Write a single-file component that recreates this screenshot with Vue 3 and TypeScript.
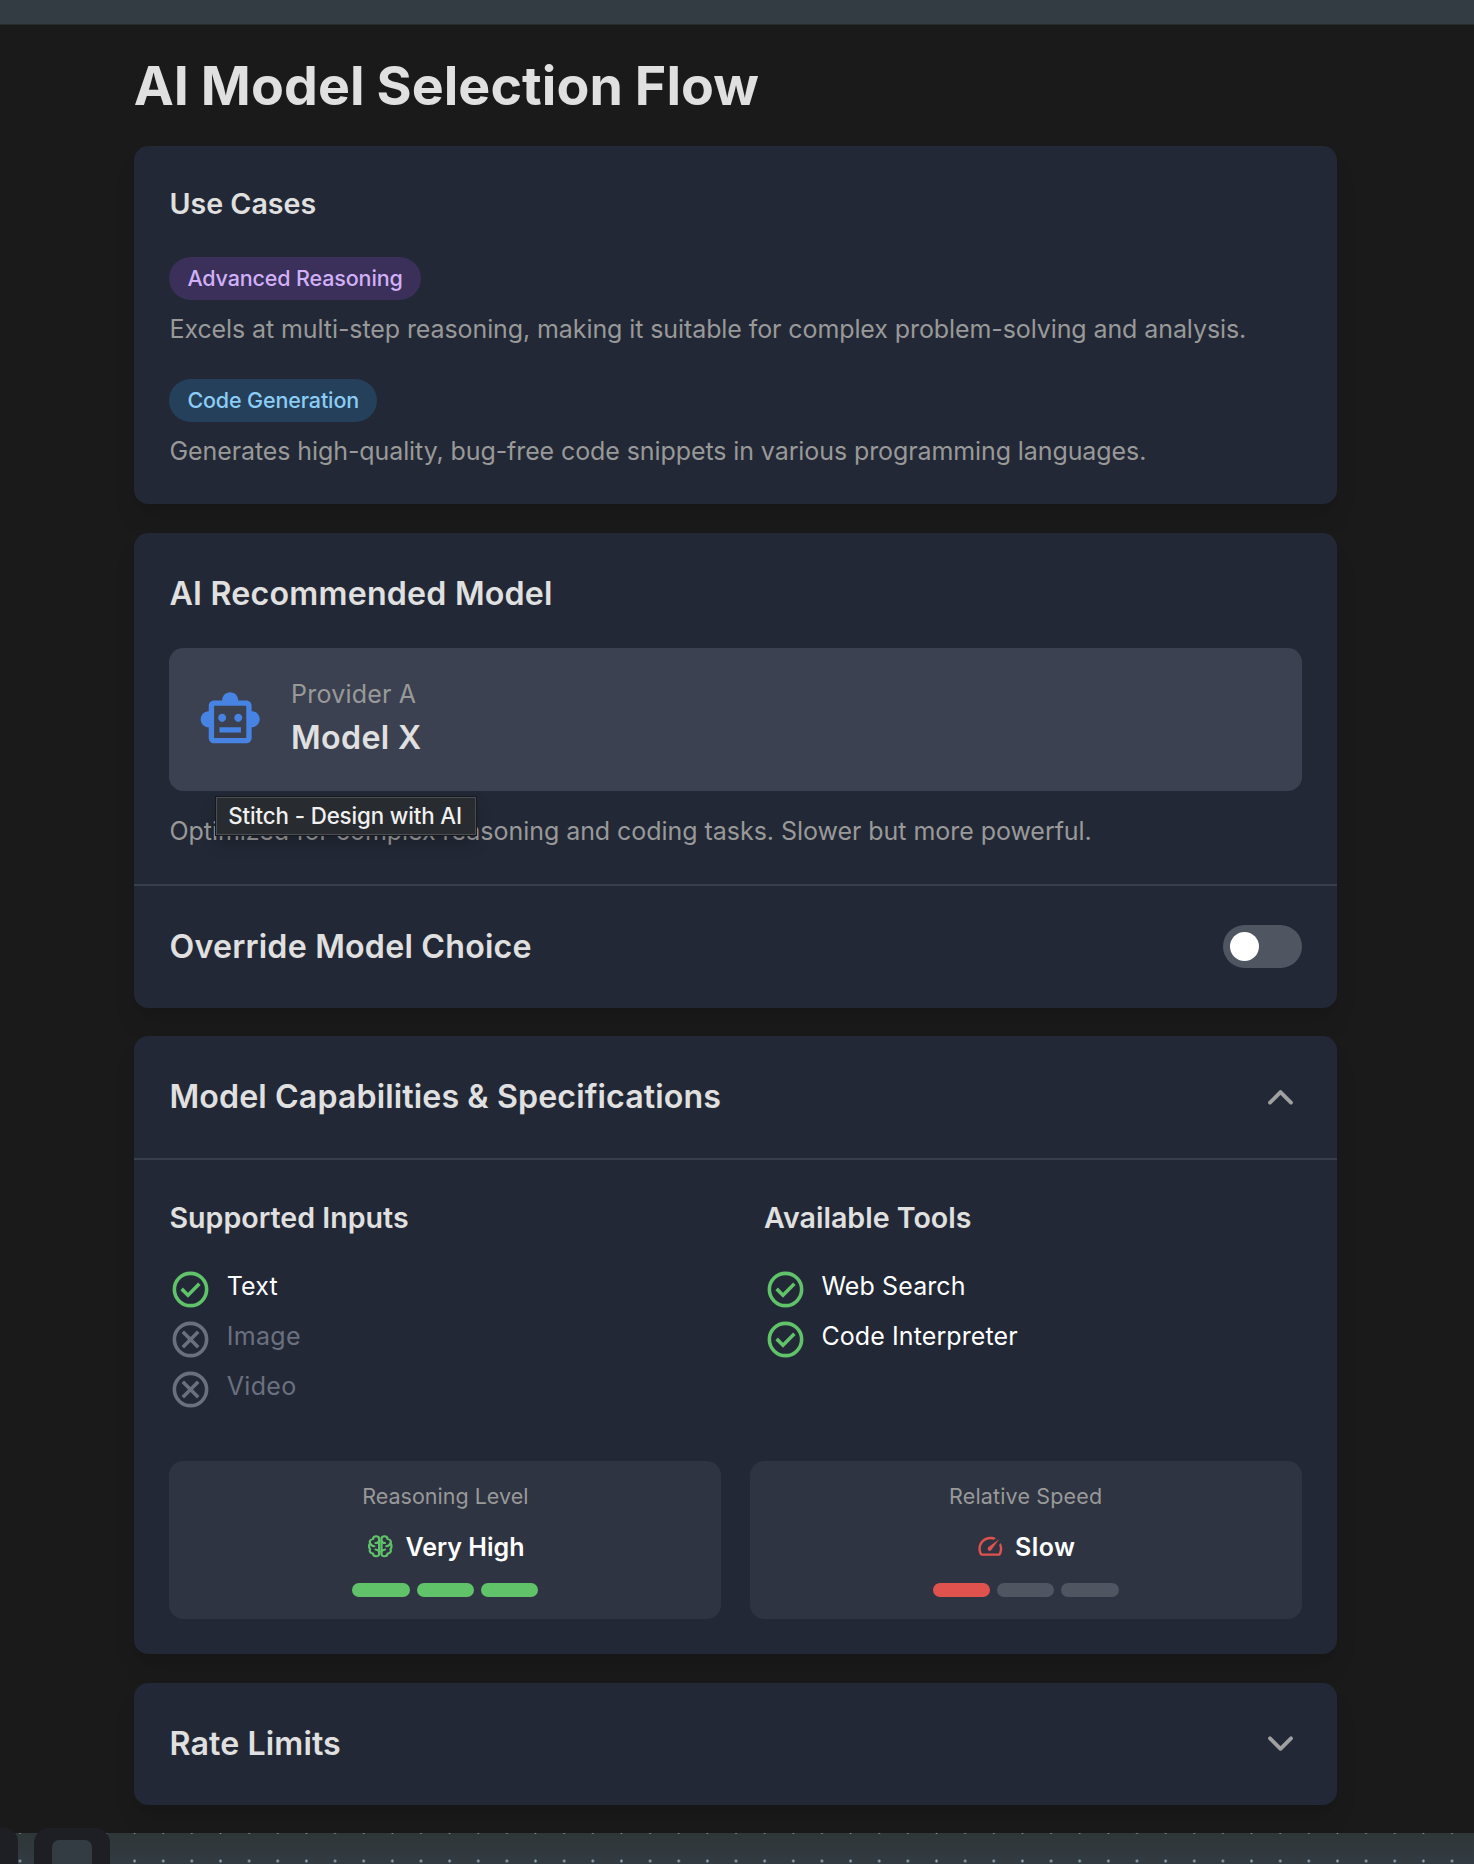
<script setup lang="ts">
interface UseCase { label: string; tone: string; text: string }
interface Feature { label: string; on: boolean }
interface Meter { label: string; value: string; icon: string; tone: string; level: number }

const useCases: UseCase[] = [
  { label: 'Advanced Reasoning', tone: 'purple', text: 'Excels at multi-step reasoning, making it suitable for complex problem-solving and analysis.' },
  { label: 'Code Generation', tone: 'blue', text: 'Generates high-quality, bug-free code snippets in various programming languages.' },
]

const groups: { title: string; items: Feature[] }[] = [
  {
    title: 'Supported Inputs',
    items: [
      { label: 'Text', on: true },
      { label: 'Image', on: false },
      { label: 'Video', on: false },
    ],
  },
  {
    title: 'Available Tools',
    items: [
      { label: 'Web Search', on: true },
      { label: 'Code Interpreter', on: true },
    ],
  },
]

const meters: Meter[] = [
  { label: 'Reasoning Level', value: 'Very High', icon: 'brain', tone: 'green', level: 3 },
  { label: 'Relative Speed', value: 'Slow', icon: 'gauge', tone: 'red', level: 1 },
]
</script>

<template>
  <div class="canvas">
    <main class="page">
      <h1>AI Model Selection Flow</h1>

      <section class="card use-cases">
        <h3>Use Cases</h3>
        <div v-for="u in useCases" :key="u.label" class="use-case">
          <span class="chip" :class="u.tone">{{ u.label }}</span>
          <p class="body">{{ u.text }}</p>
        </div>
      </section>

      <section class="card">
        <div class="recommended">
          <h2>AI Recommended Model</h2>
          <div class="model">
            <svg class="robot" viewBox="0 0 24 24"><path fill="currentColor" d="M20 9V7c0-1.1-.9-2-2-2h-3c0-1.66-1.34-3-3-3S9 3.34 9 5H6c-1.1 0-2 .9-2 2v2c-1.66 0-3 1.34-3 3s1.34 3 3 3v4c0 1.1.9 2 2 2h12c1.1 0 2-.9 2-2v-4c1.66 0 3-1.34 3-3s-1.34-3-3-3zm-2 10H6V7h12v12zm-9-6c-.83 0-1.5-.67-1.5-1.5S8.17 10 9 10s1.5.67 1.5 1.5S9.83 13 9 13zm7.5-1.5c0 .83-.67 1.5-1.5 1.5s-1.5-.67-1.5-1.5.67-1.5 1.5-1.5 1.5.67 1.5 1.5zM8 15h8v2H8v-2z" /></svg>
            <div>
              <div class="body provider">Provider A</div>
              <div class="model-name">Model X</div>
            </div>
            <div class="tooltip">Stitch - Design with AI</div>
          </div>
          <p class="body summary">Optimized for complex reasoning and coding tasks. Slower but more powerful.</p>
        </div>
        <div class="row override">
          <h2>Override Model Choice</h2>
          <span class="toggle"><i></i></span>
        </div>
      </section>

      <section class="card">
        <div class="row">
          <h2 class="specs-title">Model Capabilities &amp; Specifications</h2>
          <svg class="chevron" viewBox="0 0 43 43"><path d="M11 26.600 21.500 16.100 32 26.600" /></svg>
        </div>
        <div class="specs">
          <div class="groups">
            <div v-for="g in groups" :key="g.title">
              <h3>{{ g.title }}</h3>
              <ul>
                <li v-for="f in g.items" :key="f.label" :class="{ off: !f.on }">
                  <svg viewBox="0 0 24 24">
                    <circle cx="12" cy="12" r="9" />
                    <path v-if="f.on" d="M10.6 16.6 17.65 9.55 16.25 8.15 10.6 13.8 7.75 10.95 6.35 12.35Z" />
                    <path v-else d="m8.4 17 3.6-3.6 3.6 3.6 1.4-1.4-3.6-3.6L17 8.4 15.6 7 12 10.6 8.4 7 7 8.4l3.6 3.6L7 15.6Z" />
                  </svg>
                  <span>{{ f.label }}</span>
                </li>
              </ul>
            </div>
          </div>
          <div class="meters">
            <div v-for="m in meters" :key="m.label" class="meter" :class="m.tone">
              <div class="meter-label">{{ m.label }}</div>
              <div class="meter-value">
                <svg v-if="m.icon === 'brain'" viewBox="0 0 24 24" class="line">
                  <g transform="translate(-1.3 0) scale(1.108 1)">
                    <path d="M11.100 5.600V18.400C11.100 21 6.700 21.100 6.500 18.100 4.300 17.900 3.500 16 4.300 14.400 3.200 13.200 3.200 10.800 4.300 9.600 3.500 8 4.300 6.100 6.500 5.900 6.700 2.900 11.100 3 11.100 5.600Z" />
                    <path d="M12.900 5.600V18.400C12.900 21 17.300 21.100 17.500 18.100 19.700 17.900 20.500 16 19.700 14.400 20.800 13.200 20.800 10.800 19.700 9.600 20.500 8 19.700 6.100 17.500 5.900 17.300 2.900 12.900 3 12.900 5.600Z" />
                    <path d="M11.100 7.500C10.500 8.700 9.600 9.300 8.400 9.300M11.100 16.500C10.500 15.300 9.600 14.700 8.400 14.700M12.900 7.500C13.500 8.700 14.400 9.300 15.600 9.300M12.900 16.500C13.500 15.300 14.400 14.700 15.600 14.700M4.300 9.600C4.900 11.200 6 11.900 7.500 12M19.700 9.600C19.100 11.200 18 11.900 16.500 12" />
                  </g>
                </svg>
                <svg v-else viewBox="0 0 24 24">
                  <path fill="currentColor" d="M10.450 15.500C11.050 16.100 12.150 16.050 12.700 15.250L19.600 5.900 10.250 12.800C9.400 13.400 9.850 14.900 10.450 15.500ZM12 4C13.800 4 15.350 4.400 16.700 5.200L14.950 6.450C14.100 6.150 13.100 6 12 6 7.600 6 4 9.600 4 14 4 15.400 4.400 16.800 5.100 18H18.900C19.600 16.800 20 15.400 20 14 20 12.900 19.800 11.900 19.400 10.900L20.650 9.150C21.500 10.500 22 12.200 22 14 22 16 21.500 17.800 20.600 19.300 20.200 19.800 19.600 20 18.900 20H5.100C4.400 20 3.800 19.700 3.400 19.100 2.500 17.600 2 15.900 2 14 2 8.500 6.500 4 12 4Z" />
                </svg>
                <span>{{ m.value }}</span>
              </div>
              <div class="bars"><i v-for="n in 3" :key="n" :class="{ fill: n <= m.level }"></i></div>
            </div>
          </div>
        </div>
      </section>

      <section class="card">
        <div class="row">
          <h2 class="specs-title">Rate Limits</h2>
          <svg class="chevron" viewBox="0 0 43 43"><path d="M11 16.300 21.500 26.800 32 16.300" /></svg>
        </div>
      </section>
    </main>
    <div class="dock">
      <div class="dock-item first"></div>
      <div class="dock-item second"><i></i></div>
    </div>
  </div>
</template>

<style>
body { background: #323b42; }
</style>

<style scoped>
* { box-sizing: border-box; }
h1, h2, h3, p, ul { margin: 0; padding: 0; }
.canvas {
  height: 1864px;
  padding-top: 24px;
  display: flex;
  flex-direction: column;
  overflow: hidden;
  background: #343c43;
  color: #e0e0e0;
  font-family: Inter, "Liberation Sans", sans-serif;
}
.page {
  height: 1809px;
  flex: none;
  border-top: 1px solid #272d2e;
  padding: 28.600px 136.700px 0 133.700px;
  display: flex;
  flex-direction: column;
  gap: 28.600px;
  background: #1a1a1a;
}
h1 {
  height: 64px;
  line-height: 64px;
  font-size: 53.700px;
  font-weight: 700;
  letter-spacing: .09px;
  word-spacing: -1px;
  white-space: nowrap;
}
.card {
  border-radius: 14.300px;
  background: #222835;
  box-shadow: 0 18px 27px -5px rgba(0, 0, 0, .1), 0 7px 11px -7px rgba(0, 0, 0, .1);
}
h2 { font-size: 32.200px; line-height: 50px; font-weight: 600; letter-spacing: .2px; white-space: nowrap; }
h3 { font-size: 28.600px; line-height: 43px; font-weight: 600; white-space: nowrap; }
.specs-title { letter-spacing: .1px; }
.body { font-size: 25px; line-height: 35.800px; color: #999; letter-spacing: -.094px; white-space: nowrap; }
.use-cases { height: 358.300px; padding: 36px 35.800px 0; }
.use-cases h3 { margin-bottom: 32px; }
.use-case { height: 122px; }
.chip {
  display: block;
  width: fit-content;
  padding: 0 17.900px;
  border-radius: 22px;
  font-size: 21.500px;
  line-height: 43px;
  font-weight: 500;
  letter-spacing: -.14px;
  white-space: nowrap;
  margin-bottom: 11.500px;
}
.purple { background: #3a3059; color: #d1b0f8; }
.blue { background: #25405a; color: #8ccdf5; }
.recommended { height: 350.800px; padding: 35.800px 35.800px 0; }
.model {
  position: relative;
  display: flex;
  align-items: center;
  gap: 28.600px;
  height: 143px;
  margin: 29.200px 0 23px;
  padding: 0 28.600px;
  border-radius: 14.300px;
  background: #3b4150;
}
.robot { width: 64.400px; height: 64.400px; color: #4783e2; }
.provider { letter-spacing: .2px; padding-top: .4px; }
.summary { letter-spacing: -.046px; }
.model-name { font-size: 32.200px; line-height: 50px; font-weight: 600; letter-spacing: .35px; }
.tooltip {
  position: absolute;
  left: 46.800px;
  top: 149.300px;
  width: 260px;
  height: 38px;
  padding-left: 11px;
  border: 1px solid #4b4e52;
  outline: 1px solid #15181c;
  background: #282b2f;
  color: #f0f0f0;
  font-size: 22.300px;
  font-weight: 500;
  letter-spacing: -.12px;
  line-height: 36px;
  white-space: nowrap;
  box-shadow: 0 8px 16px rgba(0, 0, 0, .2);
}
.row {
  height: 122px;
  padding: 0 35.800px;
  display: flex;
  align-items: center;
  justify-content: space-between;
}
.override { height: 123.900px; border-top: 2px solid #383f4c; }
.toggle {
  width: 79px;
  height: 43px;
  padding: 7px;
  border-radius: 22px;
  background: #4f5561;
}
.toggle i { display: block; width: 29px; height: 29px; border-radius: 50%; background: #fff; }
.chevron { width: 43px; height: 43px; fill: none; stroke: #a0a0a0; stroke-width: 3.800; stroke-linecap: round; stroke-linejoin: round; }
.specs { height: 496px; border-top: 2px solid #383f4c; padding: 36px 35.800px 0; }
.groups { display: grid; grid-template-columns: 1fr 1fr; gap: 57.200px; height: 265px; }
ul { list-style: none; margin-top: 28.300px; }
li { display: flex; gap: 14.300px; height: 50px; font-size: 25px; line-height: 35.800px; letter-spacing: .1px; color: #fff; white-space: nowrap; }
li span { padding-top: 1.300px; }
li svg { width: 43px; height: 43px; color: #60c36a; }
li circle { fill: none; stroke: currentColor; stroke-width: 2; }
li path { fill: currentColor; }
li.off { letter-spacing: .3px; }
li.off, li.off svg { color: #6b7080; }
.meters { display: grid; grid-template-columns: 1fr 1fr; gap: 28.600px; }
.meter {
  height: 158px;
  padding-top: 21px;
  display: flex;
  flex-direction: column;
  align-items: center;
  border-radius: 14.300px;
  background: #2e3441;
}
.meter-label { font-size: 21.500px; line-height: 28.600px; color: #999; }
.red .meter-label { letter-spacing: .15px; }
.meter-value {
  display: flex;
  align-items: center;
  gap: 10.700px;
  height: 43px;
  margin: 14.200px 0 14.400px;
  color: #fff;
  font-size: 25px;
  font-weight: 600;
}
.meter-value span { padding-top: 1px; }
.red .meter-value { letter-spacing: .5px; }
.meter-value svg { width: 28.600px; height: 28.600px; }
.line { fill: none; stroke: currentColor; stroke-width: 1.700; stroke-linejoin: round; stroke-linecap: round; }
.green svg { color: #60c36a; }
.red svg { color: #df524d; }
.bars { display: flex; gap: 7.200px; }
.bars i { width: 57.300px; height: 14.300px; border-radius: 8px; background: #4f5561; }
.green .fill { background: #60c36a; }
.red .fill { background: #df524d; }
.dock {
  position: relative;
  height: 31px;
  flex: none;
  background:
    radial-gradient(circle, #8fa6b8 0 1.100px, transparent 1.500px) 5.700px 13.700px / 28.650px 28.650px,
    linear-gradient(#2e3638, #323b42);
}
.dock-item { position: absolute; top: -5px; height: 60px; background: #1e1f24; }
.first { left: -40px; width: 58px; border-radius: 14px; }
.second { left: 34px; width: 76px; border-radius: 15px; padding: 12px 18px; }
.second i { display: block; width: 40px; height: 50px; border-radius: 7px; background: #333c42; }
</style>
